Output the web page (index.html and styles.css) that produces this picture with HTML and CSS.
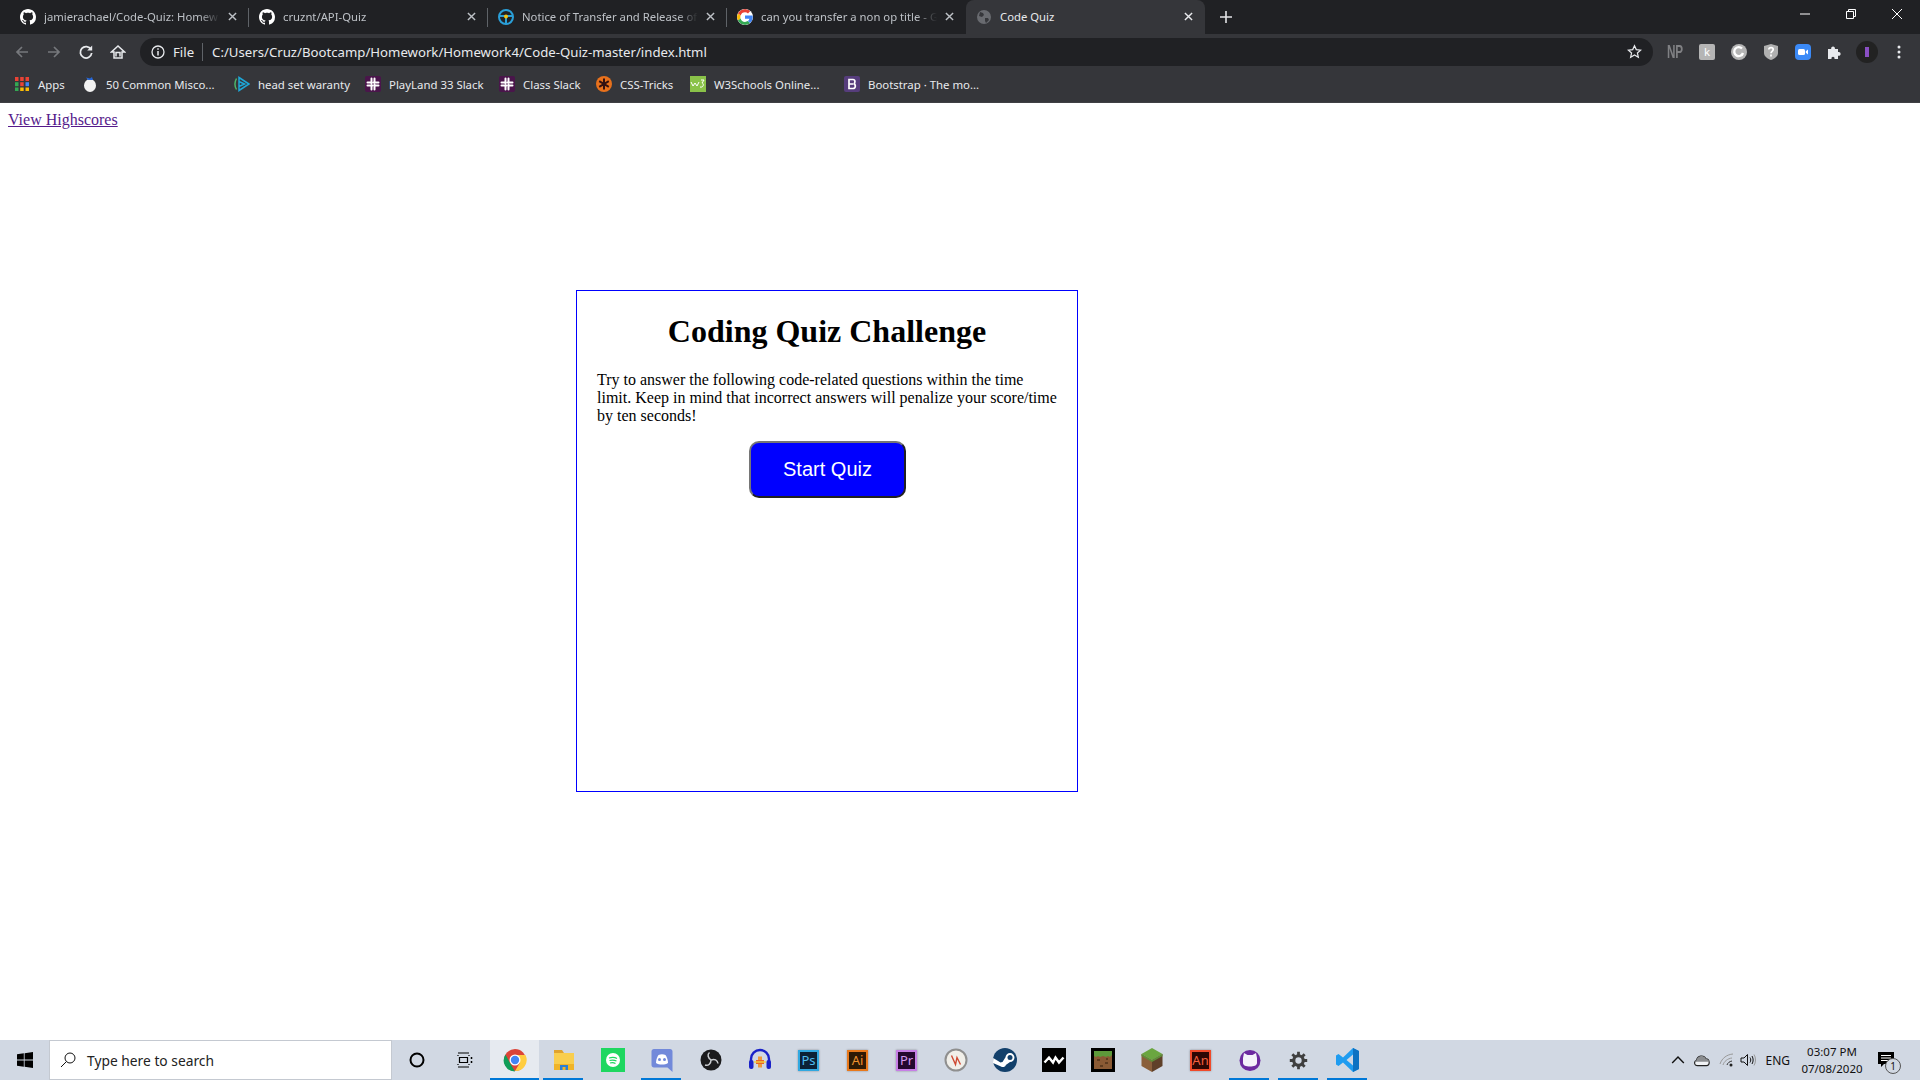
FILE: index.html
```html
<!DOCTYPE html>
<html lang="en">

<head>
    <meta charset="UTF-8">
    <title>Code Quiz</title>
    <link rel="stylesheet" href="styles.css">
</head>

<body>
    <svg class="defs" width="0" height="0">
        <symbol id="github" viewBox="0 0 16 16">
            <path fill="#fff" d="M8 0C3.58 0 0 3.58 0 8c0 3.54 2.29 6.53 5.47 7.59.4.07.55-.17.55-.38 0-.19-.01-.82-.01-1.49-2.01.37-2.53-.49-2.69-.94-.09-.23-.48-.94-.82-1.13-.28-.15-.68-.52-.01-.53.63-.01 1.08.58 1.23.82.72 1.21 1.87.87 2.33.66.07-.52.28-.87.51-1.07-1.78-.2-3.64-.89-3.64-3.95 0-.87.31-1.59.82-2.15-.08-.2-.36-1.02.08-2.12 0 0 .67-.21 2.2.82.64-.18 1.32-.27 2-.27.68 0 1.36.09 2 .27 1.53-1.04 2.2-.82 2.2-.82.44 1.1.16 1.92.08 2.12.51.56.82 1.27.82 2.15 0 3.07-1.87 3.75-3.65 3.95.29.25.54.73.54 1.48 0 1.07-.01 1.93-.01 2.2 0 .21.15.46.55.38A8.013 8.013 0 0016 8c0-4.42-3.58-8-8-8z" />
        </symbol>
        <symbol id="close" viewBox="0 0 10 10">
            <path d="M1 1l8 8M9 1l-8 8" stroke="currentColor" stroke-width="1.6" fill="none" />
        </symbol>
        <symbol id="slack" viewBox="0 0 16 16">
            <rect width="16" height="16" rx="2" fill="#4a154b" />
            <path d="M6.500 2.500v5M9.500 8.500v5M2.500 9.500h5M8.500 6.500h5M6.500 10v3.500M9.500 2.500V6M2.500 6.500H6M10 9.500h3.500" stroke="#fff" stroke-width="2" stroke-linecap="round" />
        </symbol>
        <symbol id="google" viewBox="0 0 16 16">
            <path fill="#ea4335" d="M8 3.200c1.200 0 2.200.4 3 1.200l2.300-2.300A8 8 0 0 0 .9 4.400l2.700 2.100A4.700 4.700 0 0 1 8 3.200z" />
            <path fill="#fbbc05" d="M3.600 6.500.9 4.400a8 8 0 0 0 0 7.200l2.700-2.100a4.800 4.800 0 0 1 0-3z" />
            <path fill="#34a853" d="M8 16c2.100 0 4-.7 5.300-1.900l-2.600-2c-.7.500-1.600.8-2.700.8a4.700 4.700 0 0 1-4.400-3.400L.9 11.600A8 8 0 0 0 8 16z" />
            <path fill="#4285f4" d="M15.800 8.200c0-.6-.1-1.100-.2-1.700H8v3.200h4.400a3.800 3.800 0 0 1-1.700 2.400l2.600 2c1.600-1.400 2.500-3.500 2.500-5.900z" />
        </symbol>
    </svg>

    <header class="chrome">
        <div class="tabstrip">
            <div class="tab">
                <svg class="favicon"><use href="#github" /></svg>
                <span class="tab-title">jamierachael/Code-Quiz: Homew</span>
                <svg class="tab-close"><use href="#close" /></svg>
            </div>
            <div class="tab">
                <svg class="favicon"><use href="#github" /></svg>
                <span class="tab-title">cruznt/API-Quiz</span>
                <svg class="tab-close"><use href="#close" /></svg>
            </div>
            <div class="tab">
                <svg class="favicon" viewBox="0 0 16 16">
                    <circle cx="8" cy="8" r="7" fill="none" stroke="#2a9fd8" stroke-width="2" />
                    <path d="M1.500 7h13M8 8v6" stroke="#2a9fd8" stroke-width="2" />
                    <circle cx="8" cy="7.500" r="2" fill="#f4c20d" />
                </svg>
                <span class="tab-title">Notice of Transfer and Release of</span>
                <svg class="tab-close"><use href="#close" /></svg>
            </div>
            <div class="tab tab-last">
                <svg class="favicon google-badge"><use href="#google" /></svg>
                <span class="tab-title">can you transfer a non op title - G</span>
                <svg class="tab-close"><use href="#close" /></svg>
            </div>
            <div class="tab tab-active">
                <svg class="favicon" viewBox="0 0 16 16">
                    <circle cx="8" cy="8" r="7" fill="#696b70" />
                    <path d="M4 3l3 1 1 2-2 2-3-1zM9 9l3 0 1 2-3 3-1-2z" fill="#36373b" />
                </svg>
                <span class="tab-title">Code Quiz</span>
                <svg class="tab-close"><use href="#close" /></svg>
            </div>
            <svg class="new-tab" viewBox="0 0 12 12"><path d="M6 0v12M0 6h12" stroke="#e3e4e6" stroke-width="1.600" /></svg>
            <div class="window-controls">
                <svg viewBox="0 0 10 10"><path d="M0 5h10" stroke="#fff" /></svg>
                <svg viewBox="0 0 10 10"><path d="M.5 2.500h7v7h-7zM2.500 2.500v-2h7v7h-2" stroke="#fff" fill="none" /></svg>
                <svg viewBox="0 0 10 10"><path d="M0 0l10 10M10 0L0 10" stroke="#fff" fill="none" /></svg>
            </div>
        </div>

        <div class="toolbar">
            <svg class="nav-icon" viewBox="0 0 16 16"><path d="M14 8H3M8 3L3 8l5 5" stroke="#76787c" stroke-width="1.700" fill="none" /></svg>
            <svg class="nav-icon" viewBox="0 0 16 16"><path d="M2 8h11M8 3l5 5-5 5" stroke="#76787c" stroke-width="1.700" fill="none" /></svg>
            <svg class="nav-icon" viewBox="0 0 16 16"><path d="M13 5.500A5.700 5.700 0 1 0 13.700 9" stroke="#e8eaed" stroke-width="1.800" fill="none" /><path d="M14.200 1.500v5h-5z" fill="#e8eaed" /></svg>
            <svg class="nav-icon" viewBox="0 0 16 16"><path d="M8 2L1.500 8H4v6h8V8h2.500zM6 12.500v-4h4v4" stroke="#e8eaed" stroke-width="1.500" fill="none" /></svg>
            <div class="omnibox">
                <svg class="info" viewBox="0 0 14 14"><circle cx="7" cy="7" r="6" stroke="#e8eaed" stroke-width="1.300" fill="none" /><path d="M7 6v4.500M7 3.300v1.500" stroke="#e8eaed" stroke-width="1.500" /></svg>
                <span class="scheme">File</span>
                <span class="url">C:/Users/Cruz/Bootcamp/Homework/Homework4/Code-Quiz-master/index.html</span>
                <svg class="star" viewBox="0 0 16 16"><path d="M8 1.800l1.900 4.200 4.600.5-3.400 3.100 1 4.500L8 11.800l-4.100 2.300 1-4.500L1.500 6.500l4.600-.5z" stroke="#e8eaed" stroke-width="1.300" fill="none" /></svg>
            </div>
            <div class="extensions">
                <span class="ext ext-np">NP</span>
                <span class="ext"><span class="ext-k">k</span></span>
                <svg class="ext" viewBox="0 0 16 16"><circle cx="8" cy="8" r="8" fill="#b5b5b5" /><path d="M11 4.500A4.500 4.500 0 1 0 12 9" stroke="#fff" stroke-width="2.400" fill="none" /></svg>
                <svg class="ext" viewBox="0 0 16 16"><path d="M8 0l7 2v7c0 3-3 5.500-7 7-4-1.500-7-4-7-7V2z" fill="#b0b0b0" /><path d="M5.800 5.500C6 3 10.200 3 10.200 5.500 10.200 7.500 8 7.300 8 9.300M8 10.500v2" stroke="#fff" stroke-width="1.700" fill="none" /></svg>
                <svg class="ext" viewBox="0 0 16 16"><rect width="16" height="16" rx="4" fill="#3b8af7" /><rect x="3" y="5" width="7" height="6" rx="1.500" fill="#fff" /><path d="M10.800 7.300L13 5.500v5l-2.200-1.800z" fill="#fff" /></svg>
                <svg class="ext" viewBox="0 0 16 16"><path fill="#e8eaed" d="M1 5h3.200c-.8-3.500 4.500-3.500 3.700 0H11v3c3.500-.8 3.500 4.500 0 3.700V15H7.500c.6-2.900-3.600-2.900-3 0H1z" /></svg>
                <span class="avatar"><i></i></span>
                <svg class="ext" viewBox="0 0 16 16"><circle cx="8" cy="3" r="1.500" fill="#e8eaed" /><circle cx="8" cy="8" r="1.500" fill="#e8eaed" /><circle cx="8" cy="13" r="1.500" fill="#e8eaed" /></svg>
            </div>
        </div>

        <div class="bookmarks">
            <span class="bookmark bm-apps">
                <svg class="bm-icon" viewBox="0 0 16 16">
                    <path fill="#ea4335" d="M1 1h3.500v4H1zM6.200 1h3.500v4H6.200zM11.500 1H15v4h-3.500z" />
                    <path fill="#34a853" d="M1 6.200h3.500v4H1z" /><path fill="#ea4335" d="M6.200 6.200h3.500v4H6.200z" /><path fill="#4285f4" d="M11.500 6.200H15v4h-3.500z" />
                    <path fill="#34a853" d="M1 11.500h3.500V15H1z" /><path fill="#fbbc05" d="M6.200 11.500h3.500V15H6.200zM11.500 11.500H15V15h-3.500z" />
                </svg>Apps
            </span>
            <span class="bookmark bm-misco">
                <svg class="bm-icon" viewBox="0 0 16 16"><ellipse cx="8" cy="9.500" rx="6" ry="6.500" fill="#f2f2f2" /><path d="M4 1.500l4 1 2-1.500 1 3H6z" fill="#2667d8" /></svg>50 Common Misco...
            </span>
            <span class="bookmark bm-headset">
                <svg class="bm-icon" viewBox="0 0 16 16"><path d="M5 1.500L15 8 5 14.500zM5 5.500L10.500 8 5 10.500" stroke="#1ea7d8" stroke-width="1.500" fill="none" /><path d="M2.500 2.500C.5 6 .5 10 2.500 13.500" stroke="#4cb56a" stroke-width="1.500" fill="none" /></svg>head set waranty
            </span>
            <span class="bookmark bm-playland"><svg class="bm-icon"><use href="#slack" /></svg>PlayLand 33 Slack</span>
            <span class="bookmark bm-class"><svg class="bm-icon"><use href="#slack" /></svg>Class Slack</span>
            <span class="bookmark bm-css">
                <svg class="bm-icon" viewBox="0 0 16 16"><circle cx="8" cy="8" r="8" fill="#e8711c" /><path d="M8 2.500v11M3.200 5.200l9.600 5.600M12.800 5.200l-9.600 5.600" stroke="#311" stroke-width="2" /></svg>CSS-Tricks
            </span>
            <span class="bookmark bm-w3">
                <svg class="bm-icon" viewBox="0 0 16 16"><rect width="16" height="16" fill="#8ac249" /><path d="M1 6l2 4 2-3 2 3 2-4M11 4h3l-2 3c2 0 2 5-2 4" stroke="#fff" fill="none" /></svg>W3Schools Online...
            </span>
            <span class="bookmark">
                <svg class="bm-icon" viewBox="0 0 16 16"><rect width="16" height="16" rx="2" fill="#563d7c" /><path d="M5 3.500h4c2.500 0 2.500 4 .5 4.300C12 8 12 12.500 9 12.500H5zM5 8h4" stroke="#fff" stroke-width="1.700" fill="none" /></svg>Bootstrap · The mo...
            </span>
        </div>
    </header>

    <main class="page">
        <a class="highscores" href="#">View Highscores</a>
        <section class="quiz-card">
            <h1>Coding Quiz Challenge</h1>
            <p>Try to answer the following code-related questions within the time limit. Keep in mind that incorrect answers will penalize your score/time by ten seconds!</p>
            <button type="button" class="start-btn">Start Quiz</button>
        </section>
    </main>

    <footer class="taskbar">
        <div class="tb-cell">
            <svg class="tb-icon small" viewBox="0 0 16 16"><path fill="#000" d="M0 2.300l6.800-1v6.300H0zM7.600 1.200L16 0v7.600H7.600zM0 8.400h6.800v6.300l-6.800-1zM7.600 8.400H16V16l-8.400-1.200z" /></svg>
        </div>
        <div class="search">
            <svg class="search-icon" viewBox="0 0 16 16"><circle cx="10" cy="6" r="5" stroke="#111" fill="none" /><path d="M6.500 9.500L1 15" stroke="#111" /></svg>
            <span>Type here to search</span>
        </div>
        <div class="tb-cell">
            <svg class="tb-icon small" viewBox="0 0 16 16"><circle cx="8" cy="8" r="6.500" stroke="#000" stroke-width="2" fill="none" /></svg>
        </div>
        <div class="tb-cell">
            <svg class="tb-icon small task-view" viewBox="0 0 16 16"><path d="M1 1h11M1 15h11M1 3v1M12 3v1M1 12v1M12 12v1M2.500 5.500h8v5h-8z" stroke="#000" stroke-width="1.200" fill="none" /><path d="M14.500 5v2M14.500 9v2" stroke="#000" stroke-width="1.500" /></svg>
        </div>
        <div class="tb-cell tb-open tb-active">
            <svg class="tb-icon" viewBox="0 0 24 24">
                <circle cx="12" cy="12" r="11" fill="#db4437" />
                <path d="M2.500 6.500L7 15l5 8.500A11 11 0 0 1 2.500 6.500z" fill="#0f9d58" />
                <path d="M12 7h10.400A11 11 0 0 1 12 23l4.800-8z" fill="#ffcd40" />
                <circle cx="12" cy="12" r="5.500" fill="#fff" /><circle cx="12" cy="12" r="4.200" fill="#4285f4" />
            </svg>
        </div>
        <div class="tb-cell tb-open">
            <svg class="tb-icon" viewBox="0 0 24 24"><path d="M2 2h8l2 3H2z" fill="#e0a32e" /><path d="M2 5h20v17H2z" fill="#f9ce4e" /><path d="M2 16h20v6H2z" fill="#f0b429" /><path d="M8 22v-5h8v5h-2.500v-3h-3v3z" fill="#2b7fd4" /></svg>
        </div>
        <div class="tb-cell">
            <svg class="tb-icon" viewBox="0 0 24 24"><rect width="24" height="24" fill="#1ed760" /><circle cx="12" cy="12" r="7" fill="#fff" /><path d="M8 10c3-1 6-.7 8 .5M8.500 12.500c2.500-.7 5-.5 7 .5M9 15c2-.5 4-.3 5.500.5" stroke="#1ed760" stroke-width="1.200" fill="none" /></svg>
        </div>
        <div class="tb-cell tb-open">
            <svg class="tb-icon" viewBox="0 0 24 24"><path d="M4 1h16c1.500 0 2.500 1 2.500 2.500V24l-5-4.500H4c-1.500 0-2.500-1-2.500-2.500V3.500C1.500 2 2.500 1 4 1z" fill="#7289da" /><path d="M6 15c3 2 9 2 12 0 0-3-1-6-2.500-8-2-1-5-1-7 0C7 9 6 12 6 15z" fill="#fff" /><circle cx="9.500" cy="11.500" r="1.500" fill="#7289da" /><circle cx="14.500" cy="11.500" r="1.500" fill="#7289da" /></svg>
        </div>
        <div class="tb-cell">
            <svg class="tb-icon" viewBox="0 0 24 24"><circle cx="12" cy="12" r="10.500" fill="#1b1b1d" /><path d="M12 12C9 10 8 6.500 10.500 4.500M12 12c3.500-1.500 6.500 0 7 3.500M12 12c0 3.500-2.500 6-6 5" stroke="#c9ccd0" stroke-width="1.500" fill="none" /></svg>
        </div>
        <div class="tb-cell">
            <svg class="tb-icon" viewBox="0 0 24 24"><path d="M3 14V11a9 9 0 0 1 18 0v3" stroke="#1a22c8" stroke-width="2.400" fill="none" /><rect x="1" y="12" width="4.500" height="9" rx="2" fill="#1a22c8" /><rect x="18.500" y="12" width="4.500" height="9" rx="2" fill="#1a22c8" /><path d="M10 8.500h4v11h-4z" fill="#f09a3a" /><path d="M8 12h8v4H8z" fill="#e8632a" /><path d="M6 14h12" stroke="#f7d23e" stroke-width="1.400" /></svg>
        </div>
        <div class="tb-cell">
            <span class="tb-app app-ps">Ps</span>
        </div>
        <div class="tb-cell">
            <span class="tb-app app-ai">Ai</span>
        </div>
        <div class="tb-cell">
            <span class="tb-app app-pr">Pr</span>
        </div>
        <div class="tb-cell">
            <svg class="tb-icon" viewBox="0 0 24 24"><circle cx="12" cy="12" r="10.500" fill="#f1efe9" stroke="#8f8f8f" stroke-width="2" /><path d="M7.500 7.500l4 9 1.500-7 3.500 7" stroke="#cf4a33" stroke-width="1.400" fill="none" /></svg>
        </div>
        <div class="tb-cell">
            <svg class="tb-icon" viewBox="0 0 24 24"><circle cx="12" cy="12" r="12" fill="#12406b" /><path d="M0 15l8 3.500c1.500 1.200 4.500.5 4.800-1.500l4.200-3a4.500 4.500 0 1 0-4.500-4.700L9.500 14c-1 0-1.500.2-2 .5L.2 10z" fill="#fff" /><circle cx="17" cy="9.500" r="2.500" fill="#12406b" /></svg>
        </div>
        <div class="tb-cell">
            <svg class="tb-icon" viewBox="0 0 24 24"><rect width="24" height="24" fill="#000" /><path d="M2.500 14.500L7 9.500l4 5 2.500-5 3.500 5 4.500-5" stroke="#fff" stroke-width="2.400" fill="none" /></svg>
        </div>
        <div class="tb-cell">
            <svg class="tb-icon" viewBox="0 0 24 24"><rect width="24" height="24" fill="#000" /><rect x="3" y="3" width="18" height="18" fill="#8a5a34" /><path d="M3 3h18v4l-2 2-2-1-2 1-3-1-3 1-2-1-2 1-2-1z" fill="#5d9a3a" /><path d="M6 11h3v2H6zM14 14h3v2h-3zM9 17h3v2H9zM15 10h2v2h-2z" fill="#5f3c20" /></svg>
        </div>
        <div class="tb-cell">
            <svg class="tb-icon" viewBox="0 0 24 24"><path d="M12 0l10.500 6L12 12 1.500 6z" fill="#6aa640" /><path d="M1.500 6L12 12v12L1.500 18z" fill="#8a5f3b" /><path d="M22.500 6L12 12v12l10.500-6z" fill="#5f4029" /><path d="M1.500 6L12 12l10.500-6v2L12 14 1.500 8z" fill="#5d8f38" /></svg>
        </div>
        <div class="tb-cell">
            <span class="tb-app app-an">An</span>
        </div>
        <div class="tb-cell tb-open">
            <svg class="tb-icon" viewBox="0 0 24 24"><circle cx="12" cy="12.500" r="10.500" fill="#6d2aa0" /><path d="M5 10l1-5 3.500 2h5L18 5l1 5v5c0 2.500-3 3.500-7 3.500S5 17.500 5 15z" fill="#f5f2fa" /></svg>
        </div>
        <div class="tb-cell tb-open">
            <svg class="tb-icon gear" viewBox="0 0 24 24"><circle cx="12" cy="12" r="6" stroke="#3f3f3f" stroke-width="4" fill="none" /><path d="M12 1v5M12 18v5M1 12h5M18 12h5M4.200 4.200l3.500 3.500M16.300 16.300l3.500 3.500M19.800 4.200l-3.500 3.500M7.700 16.300l-3.500 3.500" stroke="#3f3f3f" stroke-width="3.500" /></svg>
        </div>
        <div class="tb-cell tb-open">
            <svg class="tb-icon" viewBox="0 0 24 24"><path d="M17 0l6 3v18l-6 3-10-9.500L2.500 18 0 16.500v-9L2.500 6 7 9.500zM17 6.500L10.500 12l6.500 5.500z" fill="#1f9cf0" /><path d="M17 0l6 3v18l-6 3z" fill="#0d72c2" /></svg>
        </div>

        <div class="tray">
            <svg class="tray-icon chevron" viewBox="0 0 12 12"><path d="M1 8.500L6 3.500l5 5" stroke="#111" stroke-width="1.200" fill="none" /></svg>
            <svg class="tray-icon cloud" viewBox="0 0 16 12"><path d="M4 11C1 11 .5 7.500 3 6.500 4 2 9.500 1 11.500 5c3.500 0 4 6 .5 6z" fill="#f1f3f6" stroke="#222" /><path d="M3 6.500C4 2 9.500 1 11.500 5c1.500 0 2.800 1 3 2.500H1.500C1.800 7 2.300 6.800 3 6.500z" fill="#8b8d90" /></svg>
            <svg class="tray-icon wifi" viewBox="0 0 16 16"><path d="M1 12C3 6 8 2.500 14 2M4 13c1-3.500 4.500-6.500 9-7" stroke="#999" fill="none" /><path d="M8 13c.5-2 2.500-3.500 5-4" stroke="#333" fill="none" /><circle cx="12" cy="13" r="1.500" fill="#222" /></svg>
            <svg class="tray-icon volume" viewBox="0 0 16 16"><path d="M1 6h3l3.500-3.500v11L4 10H1z" stroke="#111" fill="none" /><path d="M10 5.500c1 1.500 1 3.500 0 5M12 4c1.500 2.500 1.500 5.500 0 8" stroke="#111" fill="none" /><path d="M14 2.500c2 3 2 8 0 11" stroke="#999" fill="none" /></svg>
            <span class="lang">ENG</span>
            <span class="clock"><span>03:07 PM</span><span>07/08/2020</span></span>
            <span class="notify">
                <svg viewBox="0 0 16 16"><path d="M0 0h16v12H6l-3 3v-3H0z" fill="#000" /><path d="M3 3.500h10M3 6h10M3 8.500h7" stroke="#fff" /></svg>
                <span class="notify-count">1</span>
            </span>
        </div>
    </footer>
</body>

</html>
```

FILE: styles.css
```css
html,
body {
    margin: 0;
    height: 100%;
}

body {
    display: flex;
    flex-direction: column;
    height: 1080px;
    overflow: hidden;
    background-color: white;
    font-family: "Liberation Serif", serif;
}

.defs {
    position: absolute;
}

.chrome {
    font-family: "Noto Sans", sans-serif;
    color: #e8eaed;
    font-size: 11.4px;
}

/* tab strip */
.tabstrip {
    display: flex;
    align-items: flex-end;
    height: 34px;
    padding-left: 10px;
    background-color: #202124;
}

.tab {
    position: relative;
    display: flex;
    align-items: center;
    box-sizing: border-box;
    width: 239px;
    height: 34px;
    padding: 0 10px 1px;
    font-size: 11.3px;
    color: #bdc1c6;
}

.tab::after {
    content: "";
    position: absolute;
    right: 0;
    top: 8px;
    width: 1px;
    height: 19px;
    background-color: #5f6368;
}

.tab-last::after {
    display: none;
}

.tab-active {
    background-color: #35363a;
    border-radius: 8px 8px 0 0;
    color: #e8eaed;
}

.tab-active::after {
    display: none;
}

.favicon {
    flex: none;
    width: 16px;
    height: 16px;
    margin-right: 8px;
}

.google-badge {
    border-radius: 50%;
    background-color: white;
}

.tab-title {
    flex: 1;
    min-width: 0;
    white-space: nowrap;
    -webkit-mask-image: linear-gradient(to right, black 88%, transparent);
    mask-image: linear-gradient(to right, black 88%, transparent);
}

.tab-active .tab-title {
    mask-image: none;
    -webkit-mask-image: none;
}

.tab-close {
    flex: none;
    width: 9px;
    height: 9px;
    margin-left: 8px;
    margin-right: 2px;
    color: #bdc1c6;
}

.tab-active .tab-close {
    color: #e8eaed;
}

.new-tab {
    width: 12px;
    height: 12px;
    margin: 0 0 11px 15px;
}

.window-controls {
    display: flex;
    gap: 36px;
    margin-left: auto;
    margin-right: 18px;
    align-self: flex-start;
    padding-top: 9px;
}

.window-controls svg {
    width: 10px;
    height: 10px;
}

/* toolbar */
.toolbar {
    display: flex;
    align-items: center;
    height: 35px;
    padding-left: 14px;
    background-color: #35363a;
}

.nav-icon {
    flex: none;
    width: 16px;
    height: 16px;
    margin-right: 16px;
}

.omnibox {
    display: flex;
    align-items: center;
    box-sizing: border-box;
    width: 1513px;
    height: 28px;
    margin-left: -2px;
    padding: 0 11px;
    border-radius: 14px;
    background-color: #202124;
    font-size: 13.2px;
}

.info {
    flex: none;
    width: 14px;
    height: 14px;
}

.scheme {
    margin-left: 8px;
    padding-right: 8px;
    border-right: 1px solid #5f6368;
    line-height: 18px;
}

.url {
    flex: 1;
    margin-left: 9px;
    white-space: nowrap;
}

.star {
    flex: none;
    width: 15px;
    height: 15px;
}

.extensions {
    display: flex;
    align-items: center;
    gap: 16px;
    margin-left: 14px;
}

.ext {
    display: block;
    flex: none;
    width: 16px;
    height: 16px;
}

.ext-np {
    display: flex;
    justify-content: center;
    color: #808184;
    font-family: "Liberation Sans", sans-serif;
    font-weight: bold;
    font-size: 18px;
    line-height: 16px;
    transform: scaleX(0.65);
}

.ext-k {
    display: block;
    height: 16px;
    border-radius: 2px;
    background-color: #b5b5b5;
    color: white;
    text-align: center;
    line-height: 15px;
}

.avatar {
    display: flex;
    align-items: center;
    justify-content: center;
    flex: none;
    width: 22px;
    height: 22px;
    margin: 0 -3px;
    border-radius: 50%;
    background-color: #222;
}

.avatar i {
    width: 4px;
    height: 10px;
    background-color: #8a4fc4;
}

/* bookmarks */
.bookmarks {
    display: flex;
    align-items: center;
    box-sizing: border-box;
    height: 34px;
    padding: 0 0 3px 14px;
    background-color: #35363a;
    border-bottom: 1px solid #3f4044;
    white-space: nowrap;
}

.bookmark {
    display: flex;
    align-items: center;
    flex: none;
}

.bm-icon {
    flex: none;
    width: 16px;
    height: 16px;
    margin-right: 8px;
}

.bm-apps { width: 68px; }
.bm-misco { width: 152px; }
.bm-headset { width: 131px; }
.bm-playland { width: 134px; }
.bm-class { width: 97px; }
.bm-css { width: 94px; }
.bm-w3 { width: 154px; }

/* page */
.page {
    flex: 1;
    padding: 8px;
    font-size: 16px;
    color: black;
}

.highscores {
    display: block;
    color: #551a8b;
    line-height: 18px;
}

.quiz-card {
    box-sizing: border-box;
    width: 502px;
    height: 502px;
    margin: 161px 0 0 568px;
    padding: 22px 20px;
    border: 1px solid blue;
}

.quiz-card h1 {
    margin: 0 0 21px;
    font-size: 32px;
    text-align: center;
}

.quiz-card p {
    margin: 0 0 16px;
    line-height: 18px;
}

.start-btn {
    display: block;
    width: 157px;
    margin: 0 0 0 152px;
    padding: 15px 0;
    border: 2px outset #767676;
    border-radius: 10px;
    background-color: blue;
    color: white;
    font-family: "Liberation Sans", sans-serif;
    font-size: 20px;
}

/* windows taskbar */
.taskbar {
    display: flex;
    flex: none;
    height: 40px;
    background-color: #d1d8e3;
    font-family: "Noto Sans", sans-serif;
    color: #111;
}

.tb-cell {
    position: relative;
    display: flex;
    align-items: center;
    justify-content: center;
    flex: none;
    width: 49px;
    height: 40px;
}

.tb-open::after {
    content: "";
    position: absolute;
    left: 4px;
    right: 5px;
    bottom: 0;
    height: 2px;
    background-color: #0078d7;
}

.tb-active {
    background-color: #e6eaf0;
}

.tb-active::after {
    left: 0;
    right: 0;
}

.tb-icon {
    width: 24px;
    height: 24px;
}

.tb-icon.small {
    width: 16px;
    height: 16px;
}

.tb-icon.task-view {
    margin-right: 2px;
}

.tb-icon.gear {
    width: 19px;
    height: 19px;
}

.search {
    display: flex;
    align-items: center;
    gap: 11px;
    box-sizing: border-box;
    width: 343px;
    padding-left: 10px;
    background-color: white;
    border: 1px solid #c4c9d1;
    font-size: 13.8px;
    color: #222;
}

.search-icon {
    width: 16px;
    height: 16px;
}

.tb-app {
    box-sizing: border-box;
    width: 21px;
    height: 21px;
    border-width: 2px;
    border-style: solid;
    box-shadow: 0 0 2px rgba(0, 0, 0, 0.35);
    text-align: center;
    font-size: 13px;
    line-height: 16px;
}

.app-ps {
    border-color: #31a8e0;
    background-color: #0b2136;
    color: #4fbdf0;
}

.app-ai {
    border-color: #e8791c;
    background-color: #2f1a05;
    color: #f0912e;
}

.app-pr {
    border-color: #c77fe6;
    background-color: #24082f;
    color: #d59af0;
}

.app-an {
    border-color: #f04a2a;
    background-color: #2e0704;
    color: #f4603f;
}

.tray {
    display: flex;
    align-items: center;
    margin-left: auto;
    font-size: 12px;
}

.tray-icon {
    flex: none;
    width: 16px;
    height: 16px;
}

.chevron {
    width: 14px;
    margin-right: 8px;
}

.cloud {
    width: 18px;
    margin-right: 8px;
}

.wifi {
    margin-right: 5px;
}

.volume {
    margin-right: 9px;
}

.lang {
    margin-right: 8px;
}

.clock {
    display: flex;
    flex-direction: column;
    align-items: center;
    width: 68px;
    font-size: 11.5px;
    line-height: 17px;
}

.notify {
    position: relative;
    display: block;
    width: 16px;
    height: 16px;
    margin: 0 26px 0 12px;
}

.notify svg {
    display: block;
    width: 16px;
    height: 16px;
}

.notify-count {
    position: absolute;
    left: 7px;
    top: 6px;
    width: 14px;
    height: 14px;
    border: 1px solid #555;
    border-radius: 50%;
    background-color: #d1d8e3;
    font-size: 10px;
    line-height: 14px;
    text-align: center;
}
```
